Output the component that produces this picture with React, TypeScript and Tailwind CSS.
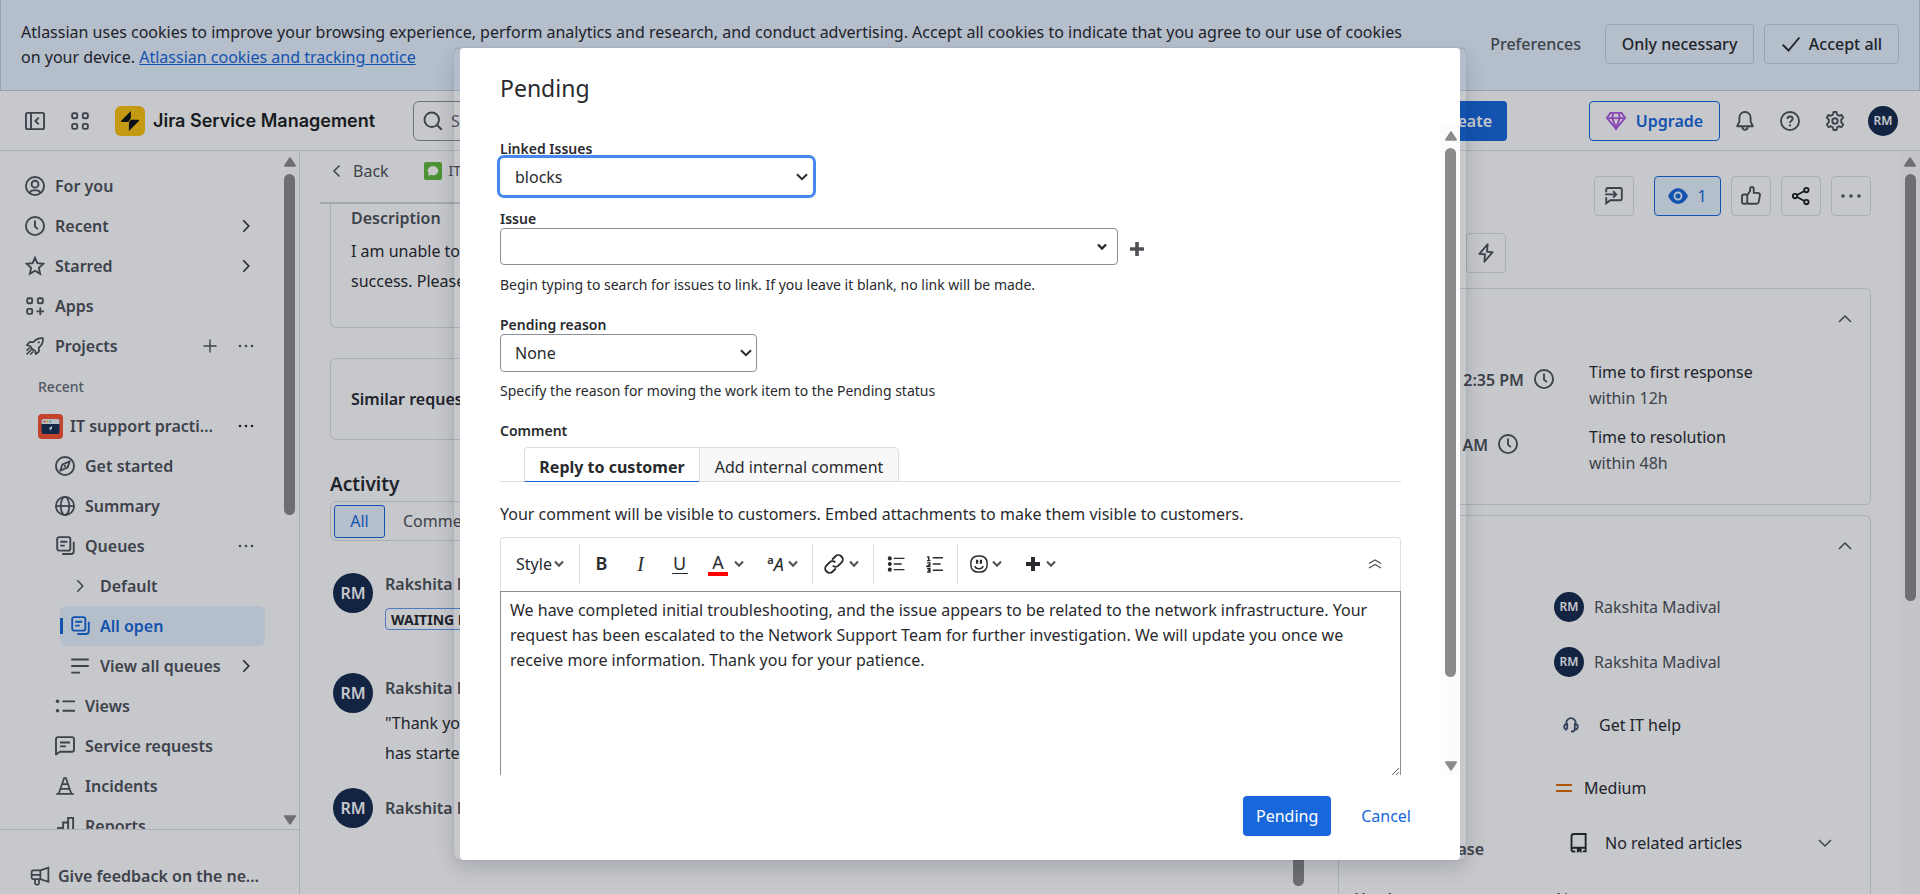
import type { ReactNode } from "react";

type IconProps = { children: ReactNode; className?: string; width?: number };

function Icon({ children, className = "size-5", width = 1.5 }: IconProps) {
  return (
    <svg
      viewBox="0 0 16 16"
      fill="none"
      stroke="currentColor"
      strokeWidth={width}
      aria-hidden="true"
      className={`shrink-0 ${className}`}
    >
      {children}
    </svg>
  );
}

const ChevronRight = () => (
  <Icon className="size-4">
    <path d="m5.300 2.200 5.500 5.800-5.500 5.800" />
  </Icon>
);
const ChevronLeft = () => (
  <Icon className="size-4">
    <path d="M10.500 2.500 5 8l5.500 5.500" />
  </Icon>
);
const ChevronUp = () => (
  <Icon className="size-4">
    <path d="m2 11 6-6 6 6" />
  </Icon>
);
const ChevronDown = () => (
  <Icon className="size-4">
    <path d="m2 5 6 6 6-6" />
  </Icon>
);
const Clock = () => (
  <Icon>
    <circle cx="8" cy="8" r="7.25" />
    <path d="M8 3.6v4.9l2.3 2" />
  </Icon>
);
const Dots = () => (
  <Icon>
    <g fill="currentColor" stroke="none">
      <circle cx="1.600" cy="8" r="1.400" />
      <circle cx="8" cy="8" r="1.400" />
      <circle cx="14.400" cy="8" r="1.400" />
    </g>
  </Icon>
);
const SmallDots = () => (
  <Icon className="size-4">
    <g fill="currentColor" stroke="none">
      <circle cx="2" cy="8" r="1.3" />
      <circle cx="8" cy="8" r="1.3" />
      <circle cx="14" cy="8" r="1.3" />
    </g>
  </Icon>
);
const Person = () => (
  <Icon>
    <circle cx="8" cy="8" r="7.25" />
    <circle cx="8" cy="6.5" r="2.75" />
    <path d="M3.800 13.600c.5-1.600 1.400-2.100 2.700-2.100h3c1.300 0 2.200.5 2.700 2.100" />
  </Icon>
);
const Star = () => (
  <Icon>
    <path d="m8 1.500 1.900 4.300 4.700.5-3.500 3.200 1 4.700L8 11.800l-4.100 2.400 1-4.700L1.400 6.300l4.700-.5Z" />
  </Icon>
);
const AppsAdd = () => (
  <Icon>
    <rect x="1.750" y="1.750" width="4" height="4" rx="1" />
    <rect x="10.250" y="1.750" width="4" height="4" rx="1" />
    <rect x="1.750" y="10.250" width="4" height="4" rx="1" />
    <path d="M12.250 9.200v6M9.200 12.250h6" />
  </Icon>
);
const AppGrid = () => (
  <Icon>
    <rect x="1.750" y="1.750" width="4" height="4" rx="1" />
    <rect x="10.250" y="1.750" width="4" height="4" rx="1" />
    <rect x="1.750" y="10.250" width="4" height="4" rx="1" />
    <rect x="10.250" y="10.250" width="4" height="4" rx="1" />
  </Icon>
);
const Rocket = () => (
  <Icon width={1.400}>
    <path d="M14.300 1.700c-3.500-.3-5.600.6-7.500 3.200H3.600L1.500 7.400l2.700.6c.5 1.700 2 3.300 3.800 3.800l.6 2.700 2.500-2.100V9.200c2.700-1.900 3.600-4 3.200-7.500Z" strokeLinejoin="round" />
    <path d="m5 11-3.800 3.800M3.600 9.400l-2.400 2.400M6.600 12.400l-2.400 2.400" />
    <circle cx="11" cy="5" r=".9" fill="currentColor" stroke="none" />
  </Icon>
);
const Compass = () => (
  <Icon>
    <circle cx="8" cy="8" r="7.250" />
    <path d="m11.800 4.200-1.700 4.900-5.900 2.700 1.700-4.900Z" strokeLinejoin="round" />
    <circle cx="8" cy="8" r=".9" fill="currentColor" stroke="none" />
  </Icon>
);
const Globe = () => (
  <Icon width={1.400}>
    <circle cx="8" cy="8" r="7.250" />
    <ellipse cx="8" cy="8" rx="3.400" ry="7.250" />
    <path d="M.8 8h14.400" />
  </Icon>
);
const QueueIcon = () => (
  <Icon>
    <rect x="1.750" y=".9" width="10.500" height="10.800" rx="1.500" />
    <path d="M4.200 4.600h5.600M4.200 7.700h3.600M15 4.500v7.700c0 1.500-.8 2.200-2.200 2.200H5.800" />
  </Icon>
);
const LinesIcon = () => (
  <Icon>
    <path d="M1 2.750h14M1 8h14M1 13.250h7" />
  </Icon>
);
const ListIcon = () => (
  <Icon>
    <path d="M6 4.250h10M6 11.750h10" />
    <circle cx="2" cy="4.250" r="1.400" fill="currentColor" stroke="none" />
    <circle cx="2" cy="11.750" r="1.400" fill="currentColor" stroke="none" />
  </Icon>
);
const RequestIcon = () => (
  <Icon>
    <path d="M.8 14.800V2.600C.8 1.500 1.500.9 2.500.9h11c1 0 1.700.6 1.700 1.700v8.300c0 1.100-.7 1.700-1.700 1.700H4Z" strokeLinejoin="round" />
    <path d="M4 5.200h8M4 8.300h4.800" />
  </Icon>
);
const IncidentIcon = () => (
  <Icon width={1.400}>
    <path d="M3 14 7.300 1.600h1.400L13 14M1 14.200h14M4.500 10.300h7M5.800 6.500h4.400" />
  </Icon>
);
const ReportIcon = () => (
  <Icon>
    <path d="M1 14.700h13.500V1.500h-4v13M10.500 5.200h-4v9.300M6.500 9.500h-4v5" />
  </Icon>
);
const Megaphone = () => (
  <Icon width={1.400}>
    <path d="M8.300 3.500 14.700 1.300v11.400L8.300 10.500H2.600c-.8 0-1.300-.5-1.300-1.300V4.800c0-.8.500-1.300 1.300-1.300ZM8.300 3.500v7M4 10.500v3.300c0 .6.400 1 1 1h1.200c.6 0 1-.4 1-1v-3.300M1.500 7h6.500" />
  </Icon>
);

type SideRow = {
  label: string;
  icon?: ReactNode;
  indent: string;
  chevron?: boolean;
  dots?: boolean;
  plus?: boolean;
  active?: boolean;
};

const ProjectBadge = () => (
  <svg viewBox="0 0 25 25" className="size-[25px] shrink-0" aria-hidden="true">
    <rect width="25" height="25" rx="4" fill="#fd5433" />
    <rect x="3.500" y="5" width="18" height="15" rx="2.500" fill="#1c3155" />
    <path d="M3.500 10V7c0-1.300.8-2 2-2h14c1.200 0 2 .7 2 2v3Z" fill="#eef1f4" />
    <circle cx="6.500" cy="7.500" r="1" fill="#f0512e" />
    <circle cx="9.500" cy="7.500" r="1" fill="#ffc400" />
    <circle cx="12.500" cy="7.500" r="1" fill="#36b5d8" />
    <path d="m14 12-3.300 2.500 1.500.5-.5 2 2.300-2.500Z" fill="#fff" />
  </svg>
);

const rows: SideRow[] = [
  { label: "For you", icon: <Person />, indent: "pl-[25px]" },
  { label: "Recent", icon: <Clock />, indent: "pl-[25px]", chevron: true },
  { label: "Starred", icon: <Star />, indent: "pl-[25px]", chevron: true },
  { label: "Apps", icon: <AppsAdd />, indent: "pl-[25px]" },
  { label: "Projects", icon: <Rocket />, indent: "pl-[25px]", plus: true, dots: true },
];

const projectRows: SideRow[] = [
  { label: "Get started", icon: <Compass />, indent: "pl-[55px]" },
  { label: "Summary", icon: <Globe />, indent: "pl-[55px]" },
  { label: "Queues", icon: <QueueIcon />, indent: "pl-[55px]", dots: true },
  {
    label: "Default",
    icon: (
      <span className="flex w-5 justify-center">
        <ChevronRight />
      </span>
    ),
    indent: "pl-[70px]",
  },
  { label: "All open", icon: <QueueIcon />, indent: "pl-[10px]", active: true },
  { label: "View all queues", icon: <LinesIcon />, indent: "pl-[70px]", chevron: true },
  { label: "Views", icon: <ListIcon />, indent: "pl-[55px]" },
  { label: "Service requests", icon: <RequestIcon />, indent: "pl-[55px]" },
  { label: "Incidents", icon: <IncidentIcon />, indent: "pl-[55px]" },
  { label: "Reports", icon: <ReportIcon />, indent: "pl-[55px]" },
];

function SideItem({ row }: { row: SideRow }) {
  const tone = row.active
    ? "ml-[60px] mr-[15px] rounded-md bg-[#e9f2fe] text-[#1868db]"
    : "text-[#505258]";
  return (
    <li className={`relative flex h-10 items-center ${tone}`}>
      {row.active && <span className="absolute left-0 h-4 w-[3px] bg-[#1868db]" />}
      <a href="#" className={`flex min-w-0 flex-1 items-center gap-[10px] ${row.indent}`}>
        {row.icon}
        <span className="truncate">{row.label}</span>
      </a>
      {row.plus && (
        <button type="button" aria-label="Create project" className="mr-5">
          <Icon className="size-4" width={1.400}>
            <path d="M8 1.500v13M1.500 8h13" />
          </Icon>
        </button>
      )}
      {row.dots && (
        <button type="button" aria-label="More actions" className="mr-[26px]">
          <SmallDots />
        </button>
      )}
      {row.chevron && (
        <button type="button" aria-label={`Expand ${row.label}`} className="mr-[26px] text-[#292a2e]">
          <ChevronRight />
        </button>
      )}
    </li>
  );
}

function ArrowUp() {
  return (
    <svg viewBox="0 0 12 10" className="h-[10px] w-3 shrink-0" fill="#8b8b8b" aria-hidden="true">
      <path d="M5.200.7c.4-.6 1.200-.6 1.600 0l5 7.500c.4.700 0 1.500-.8 1.500H1c-.8 0-1.200-.8-.8-1.500Z" />
    </svg>
  );
}
function ArrowDown() {
  return (
    <svg viewBox="0 0 12 10" className="h-[10px] w-3 shrink-0" fill="#8b8b8b" aria-hidden="true">
      <path d="M5.200 9.300c.4.600 1.200.6 1.600 0l5-7.500C12.200 1.100 11.800.3 11 .3H1C.2.300-.2 1.100.2 1.800Z" />
    </svg>
  );
}

function Avatar({ size }: { size: "lg" | "sm" }) {
  const cls = size === "lg" ? "size-10 text-[16px]" : "size-[30px] text-[12px]";
  return (
    <span className={`flex shrink-0 items-center justify-center rounded-full bg-[#172b4d] font-semibold text-white ${cls}`}>
      RM
    </span>
  );
}

function CookieBanner() {
  return (
    <section className="flex h-[91px] shrink-0 items-center border border-t-0 border-[#c5d0e0] bg-[#e9f2fe] px-5">
      <p className="flex-1 pr-14 leading-[25px]">
        Atlassian uses cookies to improve your browsing experience, perform analytics and research, and conduct
        advertising. Accept all cookies to indicate that you agree to our use of cookies on your device.{" "}
        <a href="#" className="text-[#1868db] underline">
          Atlassian cookies and tracking notice
        </a>
      </p>
      <div className="flex shrink-0 items-center gap-[10px] pb-[2px] font-medium">
        <button type="button" className="h-10 px-[14px] text-[#505258]">
          Preferences
        </button>
        <button type="button" className="h-10 w-[149px] rounded-[4px] border border-[#c5cedb]">
          Only necessary
        </button>
        <button type="button" className="flex h-10 w-[135px] items-center justify-center gap-2 rounded-[4px] border border-[#c5cedb]">
          <Icon>
            <path d="M1.300 8.500 6 13.200 14.700 2.800" />
          </Icon>
          Accept all
        </button>
      </div>
    </section>
  );
}

function TopBar() {
  return (
    <header className="flex h-[60px] shrink-0 items-center border-b border-[#dddee1] text-[#505258]">
      <div className="flex w-[413px] shrink-0 items-center pl-[25px]">
        <button type="button" aria-label="Collapse sidebar">
          <Icon>
            <rect x=".75" y="1.500" width="14.500" height="13" rx="1.300" />
            <path d="M4.800 1.500v13M11 5.300 8.300 8l2.700 2.700" />
          </Icon>
        </button>
        <button type="button" aria-label="Switch apps" className="ml-[25px]">
          <AppGrid />
        </button>
        <a href="#" className="ml-[25px] flex items-center gap-2">
          <svg viewBox="0 0 30 30" className="size-[30px]" aria-hidden="true">
            <rect width="30" height="30" rx="6" fill="#fdc40f" />
            <path d="M15.900 5v6.300c0 .8-.3 1.500-.8 2L12.500 16H6.700c-.7 0-1-.8-.5-1.300Z" fill="#101214" />
            <path d="M13.900 25v-6.300c0-.8.300-1.500.8-2l2.800-2.900h5.900c.7 0 1 .8.500 1.300Z" fill="#101214" />
            <path d="M15.900 11.300 13.500 16h.5l2-2.200h2.500l-2.600 2.800-2 2.100.5-2.700h-2Z" fill="#101214" />
          </svg>
          <span className="whitespace-nowrap font-['Inter',sans-serif] text-[18px] font-semibold text-[#1e1f21]">
            Jira Service Management
          </span>
        </a>
      </div>
      <label className="flex h-10 flex-1 items-center gap-2 rounded-md border border-[#8c8f97] px-[9px]">
        <Icon>
          <circle cx="7" cy="7" r="5.800" />
          <path d="m11.200 11.200 3.800 3.800" />
        </Icon>
        <input type="text" placeholder="Search" aria-label="Search" className="min-w-0 flex-1 placeholder:text-[#6b6e76]" />
      </label>
      <button type="button" className="ml-[10px] h-10 rounded-[4px] bg-[#1868db] px-[15px] font-semibold text-white">
        + Create
      </button>
      <div className="ml-[82px] flex items-center pr-[22px]">
        <button type="button" className="flex h-10 w-[131px] items-center justify-center gap-[10px] rounded-[4px] border border-[#1868db] font-semibold text-[#1868db]">
          <Icon className="size-5 text-[#af59e0]">
            <path d="M3.500 1.500h9l2.800 4L8 14.300.7 5.500Z" />
            <path d="M.8 5.700h14.400M5.600 1.800 5 5.700l3 8 3-8-.6-3.900" />
          </Icon>
          Upgrade
        </button>
        <button type="button" aria-label="Notifications" className="ml-[15px]">
          <Icon>
            <path d="M8 .8C5.300.8 3.500 2.800 3.500 5.500v3L1.700 12.200h12.600L12.500 8.500v-3C12.500 2.800 10.700.8 8 .8ZM5.700 12.500c.2 1.600 1 2.600 2.300 2.600s2.100-1 2.300-2.600" strokeLinejoin="round" />
          </Icon>
        </button>
        <button type="button" aria-label="Help" className="ml-[25px]">
          <Icon>
            <circle cx="8" cy="8" r="7.250" />
            <path d="M5.900 6.300C6 5 6.900 4.400 8 4.400s2.100.7 2.100 1.800C10.100 7.800 8 7.700 8 9.500" />
            <circle cx="8" cy="11.500" r=".9" fill="currentColor" stroke="none" />
          </Icon>
        </button>
        <button type="button" aria-label="Settings" className="ml-[25px]">
          <Icon>
            <path d="M6.800.8h2.400l.5 2.100 1.500.9 2.100-.7 1.300 2.200-1.600 1.500v2.400l1.600 1.500-1.300 2.200-2.100-.7-1.500.9-.5 2.100H6.800l-.5-2.100-1.500-.9-2.100.7-1.300-2.200L3 9.200V6.800L1.400 5.300l1.300-2.200 2.100.7 1.500-.9Z" strokeLinejoin="round" />
            <circle cx="8" cy="8" r="2.200" />
          </Icon>
        </button>
        <span className="ml-[23px]">
          <Avatar size="sm" />
        </span>
      </div>
    </header>
  );
}

function Sidebar() {
  return (
    <aside className="flex w-[300px] shrink-0 flex-col border-r border-[#dddee1] font-semibold">
      <div className="flex min-h-0 flex-1">
        <nav aria-label="Sidebar" className="min-h-0 flex-1 overflow-hidden pt-[15px]">
          <ul>
            {rows.map((row) => (
              <SideItem key={row.label} row={row} />
            ))}
            <li className="flex h-10 items-center pl-[38px] text-[14px] font-medium text-[#6b6e76]">Recent</li>
            <li className="flex h-10 items-center text-[#505258]">
              <a href="#" className="flex w-[218px] items-center gap-[7px] pl-[38px]">
                <ProjectBadge />
                <span className="truncate">IT support practice project</span>
              </a>
              <button type="button" aria-label="Project actions" className="ml-auto mr-[26px] text-[#292a2e]">
                <SmallDots />
              </button>
            </li>
            {projectRows.map((row) => (
              <SideItem key={row.label} row={row} />
            ))}
          </ul>
        </nav>
        <div className="flex w-[19px] flex-col items-center pb-1 pt-[6px]">
          <div className="flex flex-1 flex-col items-center gap-[7px]">
            <ArrowUp />
            <span className="h-[341px] w-[11px] rounded-full bg-[#8b8b8b]" />
          </div>
          <ArrowDown />
        </div>
      </div>
      <div className="flex h-[65px] shrink-0 items-center border-t border-[#dddee1] pl-[30px] pr-[35px] pt-[28px] text-[#505258]">
        <a href="#" className="flex min-w-0 items-center gap-2">
          <Megaphone />
          <span className="truncate">Give feedback on the new sidebar</span>
        </a>
      </div>
    </aside>
  );
}

function Conversation() {
  return (
    <main className="min-w-0 flex-1 overflow-hidden whitespace-nowrap">
      <div className="ml-5 flex h-[53px] items-start border-b-2 border-[#d5d6da] pl-[9px] pt-2 text-[#505258]">
        <a href="#" className="flex items-center gap-2 leading-6">
          <ChevronLeft />
          Back
        </a>
        <a href="#" className="ml-[35px] flex items-center gap-[7px] text-[14px] leading-6">
          <svg viewBox="0 0 18 18" className="size-[18px]" aria-hidden="true">
            <rect width="18" height="18" rx="2" fill="#63ba3c" />
            <path d="M9 4.200c3 0 5.200 2 5.200 4.500s-2.200 4.500-5.200 4.500c-.8 0-1.500-.1-2.200-.4L4 13.800l.8-2.200c-.7-.8-1-1.800-1-2.900 0-2.500 2.200-4.500 5.200-4.500Z" fill="#fff" />
          </svg>
          ITSP-12
        </a>
      </div>
      <div className="pl-[30px] pr-[60px]">
        <section className="h-[124px] rounded-b-md border border-t-0 border-[#dddee1] px-5">
          <h3 className="font-semibold leading-7 text-[#505258]">Description</h3>
          <p className="pt-1 leading-[30px]">
            I am unable to
            <br />
            success. Please
          </p>
        </section>
        <section className="mt-[30px] flex h-[82px] items-center rounded-md border border-[#dddee1] px-5">
          <h3 className="font-semibold">Similar requests</h3>
        </section>
        <h2 className="mt-[30px] text-[19px] font-semibold leading-[28px]">Activity</h2>
        <div className="mt-[3px] flex h-10 items-center gap-[18px] rounded-md border border-[#dddee1] px-[3px] text-[#505258]">
          <button type="button" className="h-[33px] w-[51px] rounded-[3px] border border-[#1868db] bg-[#e9f2fe] text-[#1868db]">
            All
          </button>
          <button type="button">Comments</button>
        </div>
        <ul className="pl-[3px]">
          <li className="flex gap-3 pt-8">
            <Avatar size="lg" />
            <div>
              <p className="font-semibold leading-[22px] text-[#505258]">Rakshita Madival</p>
              <span className="mt-[13px] flex h-[22px] items-center rounded-[4px] border border-[#669df1] px-[5px] text-[14px] font-bold">
                WAITING FOR SUPPORT
              </span>
            </div>
          </li>
          <li className="flex gap-3 pt-[43px]">
            <Avatar size="lg" />
            <div>
              <p className="font-semibold leading-[30px] text-[#505258]">Rakshita Madival</p>
              <p className="pt-[5px] leading-[30px]">
                "Thank you for
                <br />
                has started
              </p>
            </div>
          </li>
          <li className="flex items-center gap-3 pt-5">
            <Avatar size="lg" />
            <p className="font-semibold text-[#505258]">Rakshita Madival</p>
          </li>
        </ul>
      </div>
    </main>
  );
}

const boxButton = "flex h-10 w-10 items-center justify-center rounded-[4px] border border-[#dddee1]";

function Details() {
  return (
    <aside className="w-[533px] shrink-0 overflow-hidden whitespace-nowrap text-[#505258]">
      <div className="flex justify-end gap-[10px] pt-[25px]">
        <button type="button" aria-label="Give feedback" className={boxButton}>
          <Icon>
            <path d="M1.750 5V3c0-.9.500-1.400 1.400-1.400h9.700c.9 0 1.400.5 1.400 1.400v7c0 .9-.5 1.400-1.400 1.400H5l-3.200 2.400V9M.9 6.700h8.600M7.300 4.200l2.500 2.500-2.500 2.500" />
          </Icon>
        </button>
        <button type="button" className="ml-[10px] flex h-10 w-[67px] items-center justify-center gap-[9px] rounded-[4px] border border-[#1868db] bg-[#e9f2fe] text-[#1868db]">
          <Icon>
            <path d="M0 8s2.700-6.300 8-6.300S16 8 16 8s-2.700 6.300-8 6.300S0 8 0 8Z" fill="currentColor" stroke="none" />
            <circle cx="8" cy="8" r="2.800" fill="#1868db" stroke="#e9f2fe" />
          </Icon>
          1
        </button>
        <button type="button" aria-label="Like" className={boxButton}>
          <Icon>
            <path d="M5 7.300 7.300 4V2.300c0-.9.600-1.500 1.400-1.500 1 0 1.500.8 1.500 1.700v3h3.200c1.200 0 1.900.9 1.700 2l-.9 5.200c-.2.900-.9 1.500-1.800 1.500H5.700L5 13.700ZM2.300 6.800H3.800c.7 0 1.200.5 1.200 1.200v5c0 .7-.5 1.200-1.200 1.200H2c-.7 0-1.200-.5-1.200-1.200V8.300c0-.9.600-1.500 1.500-1.500Z" />
          </Icon>
        </button>
        <button type="button" aria-label="Share" className={`${boxButton} text-[#1e1f21]`}>
          <Icon>
            <circle cx="3.200" cy="8" r="1.750" />
            <circle cx="12.300" cy="3.200" r="1.750" />
            <circle cx="12.300" cy="12.800" r="1.750" />
            <path d="m4.800 7.200 6-3.200M4.800 8.800l6 3.200" />
          </Icon>
        </button>
        <button type="button" aria-label="More" className={boxButton}>
          <Dots />
        </button>
      </div>
      <div className="flex pl-[128px] pt-[17px]">
        <button type="button" aria-label="Automation" className={boxButton}>
          <Icon>
            <path d="M9.300 1 2.700 8.700l4.500.3L6.700 15l6.600-7.700-4.500-.3Z" strokeLinejoin="round" />
          </Icon>
        </button>
      </div>
      <section className="mt-[15px] h-[217px] rounded-md border border-[#dddee1]">
        <div className="flex h-[60px] items-center justify-end pr-[17px]">
          <button type="button" aria-label="Collapse SLAs">
            <ChevronUp />
          </button>
        </div>
        <div className="flex h-[65px] pl-[82px] pt-[10px]">
          <p className="flex w-[168px] items-start gap-[10px] font-semibold">
            <span className="w-[103px] text-right leading-[42px]">2:35 PM</span>
            <span className="pt-[10px]">
              <Clock />
            </span>
          </p>
          <p className="leading-[26px]">
            <span className="block text-[#292a2e]">Time to first response</span>
            within 12h
          </p>
        </div>
        <div className="flex h-[65px] pl-[82px] pt-[10px]">
          <p className="flex w-[168px] items-start gap-[10px] font-semibold">
            <span className="w-[67px] text-right leading-[42px]">9:35 AM</span>
            <span className="pt-[10px]">
              <Clock />
            </span>
          </p>
          <p className="leading-[26px]">
            <span className="block text-[#292a2e]">Time to resolution</span>
            within 48h
          </p>
        </div>
      </section>
      <section className="mt-[10px] rounded-t-md border border-b-0 border-[#dddee1]">
        <div className="flex h-[60px] items-center justify-end pr-[17px]">
          <button type="button" aria-label="Collapse details">
            <ChevronUp />
          </button>
        </div>
        <div className="flex h-[61px] items-center gap-[10px] pl-[215px] text-[#505258]">
          <Avatar size="sm" />
          Rakshita Madival
        </div>
        <div className="flex h-[49px] items-center gap-[10px] pl-[215px]">
          <Avatar size="sm" />
          Rakshita Madival
        </div>
        <div className="flex h-[78px] items-center gap-5 pl-[224px] text-[#292a2e]">
          <Icon className="size-4 text-[#44546f]" width={1.800}>
            <path d="M3.300 7V6A4.700 4.700 0 0 1 8 1.200 4.700 4.700 0 0 1 12.700 6v1M4 12.500c-1.800 0-2.800-1.200-2.800-2.800S2.500 7 4.200 7v5.300M12 12.500c1.800 0 2.800-1.200 2.800-2.800S13.500 7 11.800 7v5.300c0 1.500-1 2.200-2.500 2.200H8" />
          </Icon>
          Get IT help
        </div>
        <div className="flex h-[48px] items-center gap-3 pl-[217px] text-[#292a2e]">
          <svg viewBox="0 0 16 10" className="h-[10px] w-4" fill="#e06c00" aria-hidden="true">
            <rect y="1" width="16" height="2" rx=".5" />
            <rect y="7" width="16" height="2" rx=".5" />
          </svg>
          Medium
        </div>
        <div className="flex h-[62px] items-center pr-[37px] text-[#292a2e]">
          <span className="w-[145px] pt-3 text-right font-semibold text-[#505258]">Knowledge base</span>
          <button type="button" className="ml-[85px] flex flex-1 items-center gap-4">
            <Icon>
              <path d="M4 .8h9.300v11H4c-1.300 0-2 .7-2 1.500s.7 1.500 2 1.500h1M2 13.300V2.800c0-1.300.7-2 2-2M11 14.700h3M13.300 11v3.700" />
              <path d="M6.300 11.500H10V16l-1.800-1.300L6.300 16Z" fill="currentColor" stroke="none" />
            </Icon>
            No related articles
            <span className="ml-auto text-[#505258]">
              <ChevronDown />
            </span>
          </button>
        </div>
        <div className="flex h-[50px] items-center pl-[15px]">
          <span className="w-[202px] font-semibold">Hardware</span>
          None
        </div>
      </section>
    </aside>
  );
}

function MenuChevron() {
  return (
    <svg viewBox="0 0 10 8" className="h-2 w-[10px] shrink-0" fill="none" stroke="#505258" strokeWidth="2" aria-hidden="true">
      <path d="m1 1.500 4 4.300 4-4.300" />
    </svg>
  );
}

function SelectChevron() {
  return (
    <svg viewBox="0 0 12 8" className="pointer-events-none col-start-1 row-start-1 mr-[5px] h-2 w-3 justify-self-end" fill="none" stroke="#292a2e" strokeWidth="2" aria-hidden="true">
      <path d="m1 1.200 5 5 5-5" />
    </svg>
  );
}

const toolButton = "flex h-10 w-[39px] items-center justify-center";
const toolDivider = "h-10 w-px shrink-0 bg-[#dddee1]";
const fieldLabel = "block text-[14px] font-semibold leading-[18px]";

function Editor() {
  return (
    <div>
      <div className="flex h-[54px] items-center rounded-t-[4px] border border-b-0 border-[#dddee1] pb-[2px]">
        <button type="button" className="flex h-10 w-[78px] items-center justify-center gap-[2px]">
          Style
          <MenuChevron />
        </button>
        <span className={toolDivider} />
        <div className="flex pl-[2px]">
          <button type="button" aria-label="Bold" className={`${toolButton} text-[18px] font-semibold`}>
            B
          </button>
          <button type="button" aria-label="Italic" className={`${toolButton} font-['Liberation_Serif',serif] text-[20px] italic`}>
            I
          </button>
          <button type="button" aria-label="Underline" className={`${toolButton} text-[18px]`}>
            <span className="w-4 border-b border-[#292a2e] leading-5">U</span>
          </button>
          <button type="button" aria-label="Text colour" className="flex h-10 w-[54px] items-center justify-center gap-[6px] text-[18px]">
            <span className="w-5 border-b-4 border-[#ff0000] leading-5">A</span>
            <MenuChevron />
          </button>
          <button type="button" aria-label="More formatting" className="flex h-10 w-[59px] items-center justify-center gap-1">
            <span className="flex items-start text-[18px] italic leading-5">
              <span className="text-[11px] font-semibold not-italic leading-3">a</span>A
            </span>
            <MenuChevron />
          </button>
        </div>
        <span className={toolDivider} />
        <button type="button" aria-label="Link" className="flex h-10 w-[60px] items-center justify-center gap-[5px] pr-1">
          <Icon>
            <path d="m6.500 4.500 2.700-2.700a3.200 3.200 0 0 1 4.500 0l.4.400a3.200 3.200 0 0 1 0 4.500l-2.600 2.600a3.200 3.200 0 0 1-4.500 0M9.500 11.500l-2.700 2.700a3.200 3.200 0 0 1-4.500 0l-.4-.4a3.200 3.200 0 0 1 0-4.500l2.600-2.600a3.200 3.200 0 0 1 4.500 0" />
          </Icon>
          <MenuChevron />
        </button>
        <span className={toolDivider} />
        <div className="flex w-[83px] justify-center">
          <button type="button" aria-label="Bullet list" className={toolButton}>
            <Icon className="size-[18px]" width={1.300}>
              <path d="M6 3h9.500M6 8h7M6 13h9.500" />
              <g fill="currentColor" stroke="none">
                <circle cx="2.500" cy="3" r="1.800" />
                <circle cx="2.500" cy="8" r="1.800" />
                <circle cx="2.500" cy="13" r="1.800" />
              </g>
            </Icon>
          </button>
          <button type="button" aria-label="Numbered list" className={toolButton}>
            <Icon className="size-[18px]" width={1.300}>
              <path d="M6 2.500h9M6 8h7M6 13.500h9" />
              <path d="M1 1.800h1.400v3M1 5h3M1 7h2.400v1.300L1.200 10H4M1 12h2.500v3.200H1M1.700 13.600h1.800" />
            </Icon>
          </button>
        </div>
        <span className={toolDivider} />
        <button type="button" aria-label="Emoji" className="ml-3 flex h-10 items-center gap-1">
          <Icon className="size-[18px]" width={1.300}>
            <rect x=".8" y=".8" width="14.400" height="14.400" rx="6" />
            <path d="M6.300 4.200v3.600M9.700 4.200v3.600" strokeWidth="2" />
            <path d="M4.300 9.800c.6 1.800 1.800 2.500 3.700 2.500s3.100-.7 3.700-2.500" />
          </Icon>
          <MenuChevron />
        </button>
        <button type="button" aria-label="Insert" className="ml-6 flex h-10 items-center gap-[6px]">
          <svg viewBox="0 0 14 14" className="size-[14px]" fill="currentColor" aria-hidden="true">
            <path d="M5 0h4v5h5v4H9v5H5V9H0V5h5Z" />
          </svg>
          <MenuChevron />
        </button>
        <button type="button" aria-label="Collapse toolbar" className="ml-auto mr-[18px] text-[#505258]">
          <svg viewBox="0 0 14 10" className="h-[10px] w-[14px]" fill="none" stroke="currentColor" strokeWidth="1.300" aria-hidden="true">
            <path d="m1 4.500 6-3.500 6 3.500M1 9l6-3.500L13 9" />
          </svg>
        </button>
      </div>
      <textarea
        aria-label="Comment"
        defaultValue="We have completed initial troubleshooting, and the issue appears to be related to the network infrastructure. Your request has been escalated to the Network Support Team for further investigation. We will update you once we receive more information. Thank you for your patience."
        className="block h-[186px] w-full resize border border-[#8c8f97] px-[9px] py-[6px] leading-[25px] outline-none"
      />
    </div>
  );
}

function PendingDialog() {
  return (
    <div className="absolute inset-0 flex justify-center bg-[#050c1f]/[0.227] pb-[34px] pt-12">
      <div className="rounded-md px-[6px] shadow-[0_8px_20px_rgba(5,12,31,0.16),0_0_1px_rgba(5,12,31,0.4)]">
        <div
          role="dialog"
          aria-modal="true"
          aria-labelledby="pending-title"
          className="flex h-full w-[1000px] flex-col rounded-[4px] bg-white text-[#292a2e]"
        >
          <h1 id="pending-title" className="h-[77px] shrink-0 pl-10 pt-[23px] text-[23px] leading-[34px]">
            Pending
          </h1>
          <form className="flex min-h-0 flex-1 flex-col" onSubmit={(e) => e.preventDefault()}>
            <div className="flex min-h-0 flex-1">
              <div className="flex-1 overflow-hidden px-10 pt-[15px]">
                <label htmlFor="linked" className={fieldLabel}>
                  Linked Issues
                </label>
                <div className="grid w-[313px] items-center">
                  <select
                    id="linked"
                    className="col-start-1 row-start-1 h-[37px] w-full appearance-none rounded-[4px] bg-white px-[15px] outline-[3px] outline-[#4688ec]"
                  >
                    <option>blocks</option>
                  </select>
                  <SelectChevron />
                </div>
                <label htmlFor="issue" className={`${fieldLabel} mt-[15px]`}>
                  Issue
                </label>
                <div className="flex items-center gap-3">
                  <div className="grid w-[618px] items-center">
                    <input
                      id="issue"
                      type="text"
                      className="col-start-1 row-start-1 h-[37px] w-full rounded-[4px] border border-[#8c8f97] px-[10px]"
                    />
                    <svg viewBox="0 0 10 8" className="pointer-events-none col-start-1 row-start-1 mr-[11px] h-2 w-[10px] justify-self-end" fill="none" stroke="#292a2e" strokeWidth="2.400" aria-hidden="true">
                      <path d="m1 1.500 4 4 4-4" />
                    </svg>
                  </div>
                  <button type="button" aria-label="Add issue" className="pt-1 text-[#505258]">
                    <svg viewBox="0 0 14 14" className="size-[14px]" fill="currentColor" aria-hidden="true">
                      <path d="M5.200 0h3.600v5.200H14v3.600H8.800V14H5.200V8.800H0V5.200h5.200Z" />
                    </svg>
                  </button>
                </div>
                <p className="mt-[10px] text-[14px] leading-5">
                  Begin typing to search for issues to link. If you leave it blank, no link will be made.
                </p>
                <label htmlFor="reason" className={`${fieldLabel} mt-[21px]`}>
                  Pending reason
                </label>
                <div className="grid w-[257px] items-center">
                  <select
                    id="reason"
                    className="col-start-1 row-start-1 h-[38px] w-full appearance-none rounded-[4px] border border-[#8c8f97] bg-white px-[14px]"
                  >
                    <option>None</option>
                  </select>
                  <SelectChevron />
                </div>
                <p className="mt-[9px] text-[14px] leading-5">
                  Specify the reason for moving the work item to the Pending status
                </p>
                <p className={`${fieldLabel} mt-[21px]`}>Comment</p>
                <div role="tablist" className="mt-[7px] flex h-[35px] border-b border-[#dddee1] pl-6">
                  <button
                    type="button"
                    role="tab"
                    aria-selected="true"
                    className="h-[35px] w-[175px] rounded-tl-[4px] border border-r-0 border-[#dddee1] border-b-[#1868db] bg-white pt-1 font-bold"
                  >
                    Reply to customer
                  </button>
                  <button
                    type="button"
                    role="tab"
                    aria-selected="false"
                    className="h-[35px] w-[200px] rounded-tr-[4px] border border-[#dddee1] bg-[#f8f8f8] pt-1"
                  >
                    Add internal comment
                  </button>
                </div>
                <p className="mb-[10px] mt-5 leading-[25px]">
                  Your comment will be visible to customers. Embed attachments to make them visible to customers.
                </p>
                <Editor />
              </div>
              <div className="flex w-[19px] flex-col items-center bg-[#fcfcfc] pb-1 pt-[6px]">
                <div className="flex flex-1 flex-col items-center gap-[7px]">
                  <ArrowUp />
                  <span className="h-[529px] w-[11px] rounded-full bg-[#8b8b8b]" />
                </div>
                <ArrowDown />
              </div>
            </div>
            <div className="flex h-[85px] shrink-0 items-center justify-end gap-[30px] pb-[3px] pr-[49px]">
              <button type="submit" className="h-10 w-[88px] rounded-[4px] bg-[#1868db] text-white">
                Pending
              </button>
              <button type="button" className="text-[#1868db]">
                Cancel
              </button>
            </div>
          </form>
        </div>
      </div>
    </div>
  );
}

export default function App() {
  return (
    <div className="relative flex h-screen flex-col overflow-hidden bg-white font-['Noto_Sans','Open_Sans',sans-serif] text-[16px] text-[#292a2e]">
      <CookieBanner />
      <TopBar />
      <div className="flex min-h-0 flex-1">
        <Sidebar />
        <Conversation />
        <div className="flex w-[19px] shrink-0 flex-col items-center justify-end pb-2">
          <span className="h-[600px] w-[11px] rounded-full bg-[#8b8b8b]" />
        </div>
        <div className="flex shrink-0 pl-[30px]">
          <Details />
          <div className="ml-[29px] flex w-[20px] flex-col items-center gap-[7px] bg-[#fcfcfc] pt-[6px]">
            <ArrowUp />
            <span className="h-[427px] w-[11px] rounded-full bg-[#8b8b8b]" />
          </div>
        </div>
      </div>
      <PendingDialog />
    </div>
  );
}
